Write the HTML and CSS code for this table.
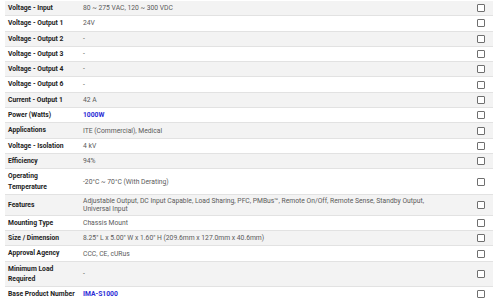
FILE: index.html
```html
<!DOCTYPE html>
<html>
<head>
<meta charset="utf-8">
<link rel="stylesheet" href="styles.css">
</head>
<body>
<table class="specs">
<tbody>
<tr><th>Voltage - Input</th><td>80 ~ 275 VAC, 120 ~ 300 VDC</td><td class="cb"><span class="box"></span></td></tr>
<tr><th>Voltage - Output 1</th><td>24V</td><td class="cb"><span class="box"></span></td></tr>
<tr><th>Voltage - Output 2</th><td>-</td><td class="cb"><span class="box"></span></td></tr>
<tr><th>Voltage - Output 3</th><td>-</td><td class="cb"><span class="box"></span></td></tr>
<tr><th>Voltage - Output 4</th><td>-</td><td class="cb"><span class="box"></span></td></tr>
<tr><th>Voltage - Output 6</th><td>-</td><td class="cb"><span class="box"></span></td></tr>
<tr><th>Current - Output 1</th><td>42 A</td><td class="cb"><span class="box"></span></td></tr>
<tr><th>Power (Watts)</th><td><a class="link">1000W</a></td><td class="cb"><span class="box"></span></td></tr>
<tr><th>Applications</th><td>ITE (Commercial), Medical</td><td class="cb"><span class="box"></span></td></tr>
<tr><th>Voltage - Isolation</th><td>4 kV</td><td class="cb"><span class="box"></span></td></tr>
<tr><th>Efficiency</th><td>94%</td><td class="cb"><span class="box"></span></td></tr>
<tr><th>Operating<br>Temperature</th><td>-20°C ~ 70°C (With Derating)</td><td class="cb"><span class="box"></span></td></tr>
<tr><th>Features</th><td>Adjustable Output, DC Input Capable, Load Sharing, PFC, PMBus™, Remote On/Off, Remote Sense, Standby Output,<br>Universal Input</td><td class="cb"><span class="box"></span></td></tr>
<tr><th>Mounting Type</th><td>Chassis Mount</td><td class="cb"><span class="box"></span></td></tr>
<tr><th>Size / Dimension</th><td>8.25" L x 5.00" W x 1.60" H (209.6mm x 127.0mm x 40.6mm)</td><td class="cb"><span class="box"></span></td></tr>
<tr><th>Approval Agency</th><td>CCC, CE, cURus</td><td class="cb"><span class="box"></span></td></tr>
<tr><th>Minimum Load<br>Required</th><td>-</td><td class="cb"><span class="box"></span></td></tr>
<tr><th>Base Product Number</th><td><a class="link">IMA-S1000</a></td><td class="cb"><span class="box"></span></td></tr>
</tbody>
</table>
</body>
</html>
```
FILE: styles.css
```css
html, body {
  margin: 0;
  padding: 0;
  background: #ffffff;
}
body {
  font-family: Roboto, "Liberation Sans", sans-serif;
  font-size: 6.75px;
  color: #555555;
}
.specs {
  margin: 1px 0 0 5px;
  width: 488px;
  border-collapse: collapse;
}
.specs tr {
  border-bottom: 1px solid #e2e2e2;
}
.specs tr:nth-child(odd) {
  background: #f3f3f3;
}
.specs th, .specs td {
  padding: 2px 3px;
  line-height: 8px;
  vertical-align: middle;
  text-align: left;
}
.specs th {
  width: 69px;
  line-height: 10.3px;
  font-weight: bold;
  color: #222222;
}
.specs td {
  color: #5a5a5a;
}
.link {
  color: #2b2bd6;
  font-weight: bold;
}
.specs td.cb {
  width: 12px;
  padding: 0 4px 0 0;
}
.box {
  display: block;
  width: 6px;
  height: 6px;
  border: 1px solid #6f6f6f;
  border-radius: 1px;
  background: #fff;
}
```
